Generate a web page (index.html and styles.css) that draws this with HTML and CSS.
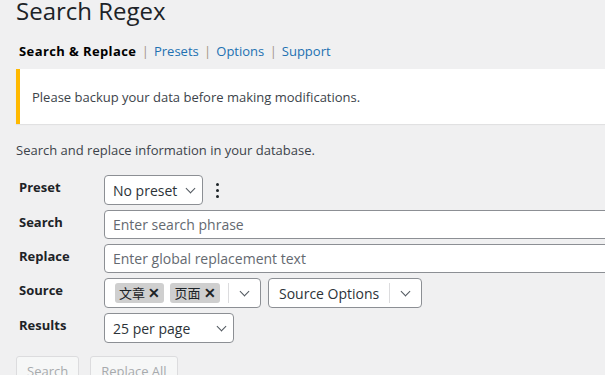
FILE: index.html
```html
<!DOCTYPE html>
<html>
  <head>
    <meta charset="UTF-8" />
    <title>Search Regex</title>
    <link rel="stylesheet" href="styles.css">
  </head>

  <body>
    <div class="wrap">
      <h1>Search Regex</h1>

      <ul class="subsubsub">
        <li><a class="current">Search &amp; Replace</a> <span class="sep">|</span></li>
        <li><a>Presets</a> <span class="sep">|</span></li>
        <li><a>Options</a> <span class="sep">|</span></li>
        <li><a>Support</a></li>
      </ul>

      <div class="notice">
        <p>Please backup your data before making modifications.</p>
      </div>

      <p class="desc">Search and replace information in your database.</p>

      <div class="form-table">
        <div class="label">Preset</div>
        <div class="field">
          <div class="select select-preset">No preset <span class="chev"></span></div>
          <span class="kebab"><i></i><i></i><i></i></span>
        </div>

        <div class="label">Search</div>
        <div class="field">
          <input type="text" class="text-input" placeholder="Enter search phrase" />
        </div>

        <div class="label">Replace</div>
        <div class="field">
          <input type="text" class="text-input" placeholder="Enter global replacement text" />
        </div>

        <div class="label">Source</div>
        <div class="field">
          <div class="multi">
            <div class="tags">
              <span class="tag">文章 <b>✕</b></span>
              <span class="tag">页面 <b>✕</b></span>
            </div>
            <span class="divider"></span>
            <span class="drop"><span class="chev"></span></span>
          </div>
          <div class="multi multi-options">
            <div class="tags"><span class="plain">Source Options</span></div>
            <span class="divider"></span>
            <span class="drop"><span class="chev"></span></span>
          </div>
        </div>

        <div class="label">Results</div>
        <div class="field">
          <div class="select select-results">25 per page <span class="chev"></span></div>
        </div>
      </div>

      <div class="actions">
        <button type="button" disabled>Search</button>
        <button type="button" disabled>Replace All</button>
      </div>
    </div>
  </body>
</html>
```

FILE: styles.css
```css
* {
  box-sizing: border-box;
}

body {
  margin: 0;
  font-family: "Open Sans", "Noto Sans CJK SC", sans-serif;
  font-size: 13px;
  color: #3c434a;
  background-color: #f0f0f1;
  overflow: hidden;
}

.wrap {
  padding: 0 0 0 16px;
  width: 640px;
}

h1 {
  font-size: 24px;
  font-weight: 400;
  color: #1d2327;
  line-height: 22px;
  margin: 0;
}

.subsubsub {
  list-style: none;
  margin: 19px 0 0 3px;
  padding: 0;
  display: flex;
  gap: 5px;
  line-height: 20px;
}

.subsubsub li {
  word-spacing: 2px;
}

.subsubsub a {
  color: #2271b1;
}

.subsubsub a.current {
  color: #000;
  font-weight: 700;
  letter-spacing: 0.4px;
  word-spacing: 0;
}

.subsubsub .sep {
  color: #a39585;
}

.notice {
  background-color: #fff;
  border-left: 4px solid #ffb900;
  box-shadow: 0 1px 1px rgba(0, 0, 0, 0.06);
  margin-top: 8px;
  height: 55px;
  padding: 0 12px;
  display: flex;
  align-items: center;
}

.notice p {
  margin: 0;
}

.desc {
  margin: 16px 0 0;
  line-height: 20px;
}

.form-table {
  display: grid;
  grid-template-columns: 88px 1fr;
  row-gap: 5px;
  margin-top: 15px;
  align-items: center;
}

.label {
  font-weight: 700;
  color: #1d2327;
  padding-left: 3px;
  margin-top: -6px;
}

.field {
  display: flex;
  align-items: center;
  gap: 7px;
}

.select,
.text-input,
.multi {
  height: 30px;
  border: 1px solid #8c8f94;
  border-radius: 4px;
  background-color: #fff;
  font-family: inherit;
  font-size: 14px;
  color: #2c3338;
}

.text-input {
  height: 29px;
}

.select {
  display: flex;
  align-items: center;
  justify-content: space-between;
  padding: 0 8px;
}

.select-preset {
  width: 99px;
}

.select-results {
  width: 130px;
}

.chev {
  width: 7px;
  height: 7px;
  border-right: 1.5px solid #50575e;
  border-bottom: 1.5px solid #50575e;
  transform: rotate(45deg);
  margin-top: -4px;
}

.kebab {
  display: flex;
  flex-direction: column;
  gap: 3px;
  margin-left: 6px;
}

.kebab i {
  display: block;
  width: 3px;
  height: 3px;
  border-radius: 50%;
  background-color: #1d2327;
}

.text-input {
  width: 520px;
  padding: 0 8px;
  outline: none;
}

.text-input::placeholder {
  color: #646970;
}

.multi {
  display: flex;
  align-items: center;
  width: 157px;
  padding-left: 10px;
}

.multi-options {
  width: 154px;
}

.tags {
  display: flex;
  gap: 6px;
  flex: 1;
}

.tag {
  background-color: #cfcfcf;
  border-radius: 3px;
  font-size: 13px;
  padding: 1px 4px;
  line-height: 18px;
  color: #1d2327;
}

.tag b {
  font-size: 14px;
}

.plain {
  color: #2c3338;
}

.divider {
  width: 1px;
  height: 20px;
  background-color: #dcdcde;
}

.drop {
  width: 31px;
  display: flex;
  justify-content: center;
}

.actions {
  display: flex;
  gap: 11px;
  margin-top: 13px;
}

.actions button {
  font-family: inherit;
  font-size: 13px;
  padding: 0 10px;
  height: 30px;
  border: 1px solid #dcdcde;
  border-radius: 3px;
  background-color: #f6f7f7;
  color: #a7aaad;
}
```
